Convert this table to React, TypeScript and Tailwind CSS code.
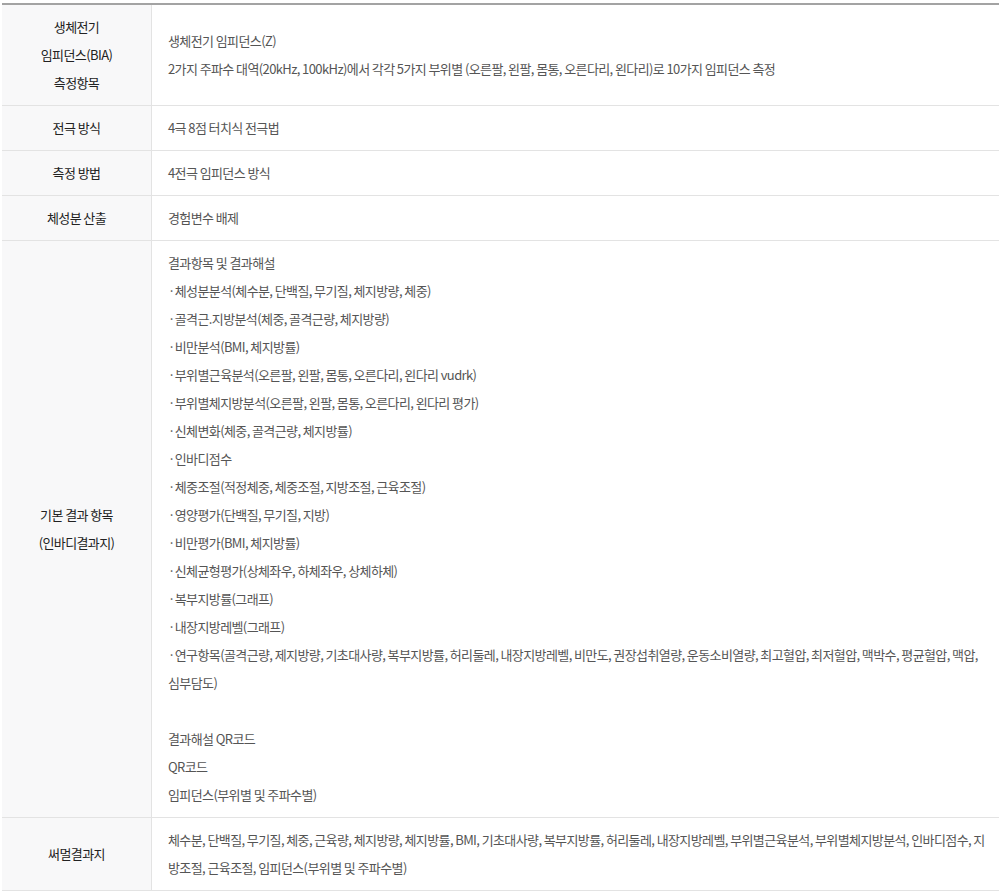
const rows: { head: string[]; lines: string[] }[] = [
  {
    head: ["생체전기", "임피던스(BIA)", "측정항목"],
    lines: [
      "생체전기 임피던스(Z)",
      "2가지 주파수 대역(20kHz, 100kHz)에서 각각 5가지 부위별 (오른팔, 왼팔, 몸통, 오른다리, 왼다리)로 10가지 임피던스 측정",
    ],
  },
  { head: ["전극 방식"], lines: ["4극 8점 터치식 전극법"] },
  { head: ["측정 방법"], lines: ["4전극 임피던스 방식"] },
  { head: ["체성분 산출"], lines: ["경험변수 배제"] },
  {
    head: ["기본 결과 항목", "(인바디결과지)"],
    lines: [
      "결과항목 및 결과해설",
      "·체성분분석(체수분, 단백질, 무기질, 체지방량, 체중)",
      "·골격근.지방분석(체중, 골격근량, 체지방량)",
      "·비만분석(BMI, 체지방률)",
      "·부위별근육분석(오른팔, 왼팔, 몸통, 오른다리, 왼다리 vudrk)",
      "·부위별체지방분석(오른팔, 왼팔, 몸통, 오른다리, 왼다리 평가)",
      "·신체변화(체중, 골격근량, 체지방률)",
      "·인바디점수",
      "·체중조절(적정체중, 체중조절, 지방조절, 근육조절)",
      "·영양평가(단백질, 무기질, 지방)",
      "·비만평가(BMI, 체지방률)",
      "·신체균형평가(상체좌우, 하체좌우, 상체하체)",
      "·복부지방률(그래프)",
      "·내장지방레벨(그래프)",
      "·연구항목(골격근량, 제지방량, 기초대사량, 복부지방률, 허리둘레, 내장지방레벨, 비만도, 권장섭취열량, 운동소비열량, 최고혈압, 최저혈압, 맥박수, 평균혈압, 맥압, 심부담도)",
      "",
      "결과해설 QR코드",
      "QR코드",
      "임피던스(부위별 및 주파수별)",
    ],
  },
  {
    head: ["써멀결과지"],
    lines: [
      "체수분, 단백질, 무기질, 체중, 근육량, 체지방량, 체지방률, BMI, 기초대사량, 복부지방률, 허리둘레, 내장지방레벨, 부위별근육분석, 부위별체지방분석, 인바디점수, 지방조절, 근육조절, 임피던스(부위별 및 주파수별)",
    ],
  },
];

export default function App() {
  return (
    <div className="bg-white w-[1002px] h-[895px] pt-[3px] pl-[2px]" style={{ fontFamily: '"Noto Sans CJK KR", "Noto Sans", sans-serif' }}>
      <div className="w-[997px] border-t-2 border-[#a3a3a3]">
        {rows.map((row, i) => (
          <div key={i} className="grid grid-cols-[150px_1fr] border-b border-[#e3e3e3]">
            <div className="flex flex-col items-center justify-center bg-[#f8f8f9] border-r border-[#e3e3e3] py-2 text-[13px] leading-[28px] tracking-[-0.6px] text-[#222]">
              {row.head.map((h, j) => (
                <div key={j}>{h}</div>
              ))}
            </div>
            <div className="flex flex-col justify-center py-2 pl-4 pr-3 text-[13px] leading-[28px] tracking-[-0.6px] text-[#555]">
              {row.lines.map((l, j) => (
                <div key={j} className="min-h-[28px]">{l}</div>
              ))}
            </div>
          </div>
        ))}
      </div>
    </div>
  );
}
